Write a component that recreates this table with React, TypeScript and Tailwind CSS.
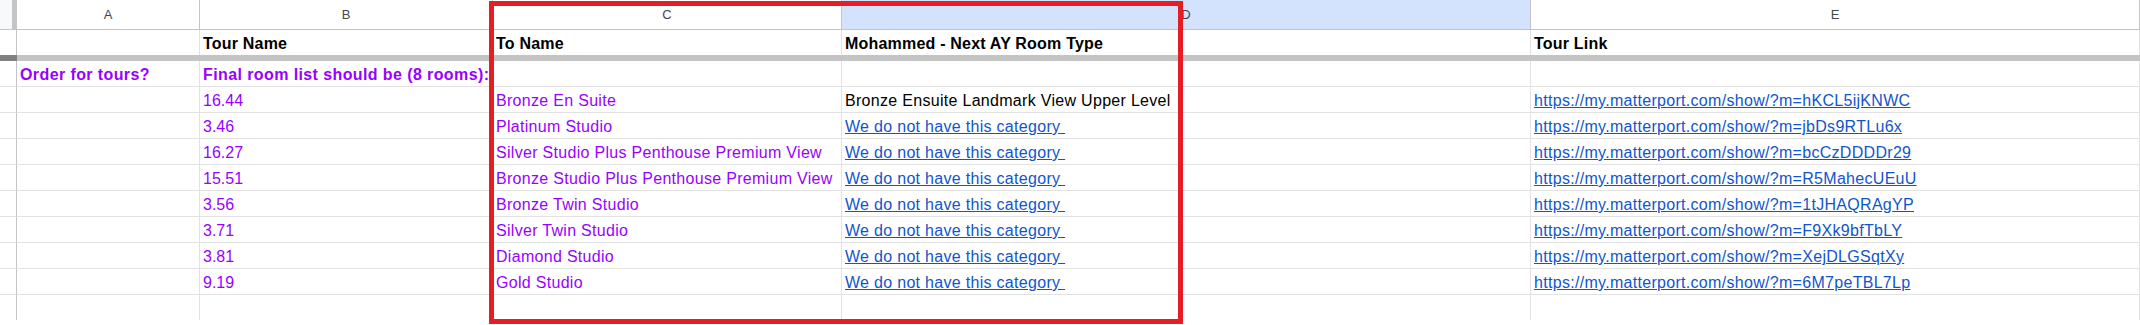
import React from 'react';

type Row = {
  time: string;
  name: string;
  roomType: string;
  isLink: boolean;
  tour: string;
};

const rows: Row[] = [
  { time: '16.44', name: 'Bronze En Suite', roomType: 'Bronze Ensuite Landmark View Upper Level', isLink: false, tour: 'https://my.matterport.com/show/?m=hKCL5ijKNWC' },
  { time: '3.46', name: 'Platinum Studio', roomType: 'We do not have this category ', isLink: true, tour: 'https://my.matterport.com/show/?m=jbDs9RTLu6x' },
  { time: '16.27', name: 'Silver Studio Plus Penthouse Premium View', roomType: 'We do not have this category ', isLink: true, tour: 'https://my.matterport.com/show/?m=bcCzDDDDr29' },
  { time: '15.51', name: 'Bronze Studio Plus Penthouse Premium View', roomType: 'We do not have this category ', isLink: true, tour: 'https://my.matterport.com/show/?m=R5MahecUEuU' },
  { time: '3.56', name: 'Bronze Twin Studio', roomType: 'We do not have this category ', isLink: true, tour: 'https://my.matterport.com/show/?m=1tJHAQRAgYP' },
  { time: '3.71', name: 'Silver Twin Studio', roomType: 'We do not have this category ', isLink: true, tour: 'https://my.matterport.com/show/?m=F9Xk9bfTbLY' },
  { time: '3.81', name: 'Diamond Studio', roomType: 'We do not have this category ', isLink: true, tour: 'https://my.matterport.com/show/?m=XejDLGSqtXy' },
  { time: '9.19', name: 'Gold Studio', roomType: 'We do not have this category ', isLink: true, tour: 'https://my.matterport.com/show/?m=6M7peTBL7Lp' },
];

const cols = 'grid grid-cols-[17px_183px_293px_349px_689px_1fr]';

// one spreadsheet cell, text sits at the bottom like in Sheets
const Cell: React.FC<{ className?: string; children?: React.ReactNode }> = ({ className = '', children }) => (
  <div className={`flex items-end pl-[3px] pb-[2px] border-r border-b border-[#e2e2e3] whitespace-pre overflow-hidden leading-[18px] ${className}`}>
    {children}
  </div>
);

const RowHead: React.FC<{ last?: boolean }> = ({ last }) => (
  <div className={`border-r border-r-[#c4c4c4] ${last ? '' : 'border-b border-b-[#e2e2e3]'}`} />
);

const ColHead: React.FC<{ label: string; active?: boolean }> = ({ label, active }) => (
  <div
    className={`flex items-center justify-center border-r border-b border-[#c4c4c4] text-[13px] text-[#444746] ${active ? 'bg-[#d3e3fd]' : 'bg-white'}`}
  >
    {label}
  </div>
);

export default function App() {
  return (
    <div className="relative w-[2140px] h-[325px] overflow-hidden bg-white text-[16px] text-black font-['Liberation_Sans',Arial,sans-serif]">
      {/* column letters */}
      <div className={`${cols} h-[30px]`}>
        <div className="bg-[#f8f9fa] border-r-[5px] border-r-[#c4c4c4] border-b border-b-[#c4c4c4]" />
        <ColHead label="A" />
        <ColHead label="B" />
        <ColHead label="C" />
        <ColHead label="D" active />
        <ColHead label="E" />
      </div>

      {/* frozen header row */}
      <div className={`${cols} h-[25px] font-bold tracking-[0.2px]`}>
        <div className="border-r border-[#c4c4c4]" />
        <Cell className="border-b-0" />
        <Cell className="border-b-0">Tour Name</Cell>
        <Cell className="border-b-0">To Name</Cell>
        <Cell className="border-b-0">Mohammed - Next AY Room Type</Cell>
        <Cell className="border-b-0">Tour Link</Cell>
      </div>

      {/* freeze bar */}
      <div className="flex h-[6px]">
        <div className="w-[17px] bg-[#808080]" />
        <div className="flex-1 bg-[#c4c4c4]" />
      </div>

      <div className={`${cols} h-[26px] font-bold text-[#9900ff] tracking-[0.4px]`}>
        <RowHead />
        <Cell>Order for tours?</Cell>
        <Cell>Final room list should be (8 rooms):</Cell>
        <Cell />
        <Cell />
        <Cell />
      </div>

      {rows.map((r) => (
        <div key={r.tour} className={`${cols} h-[26px] tracking-[0.3px]`}>
          <RowHead />
          <Cell />
          <Cell className="text-[#9900ff] tracking-normal">{r.time}</Cell>
          <Cell className="text-[#9900ff]">{r.name}</Cell>
          <Cell>
            {r.isLink ? <span className="text-[#1155cc] underline">{r.roomType}</span> : r.roomType}
          </Cell>
          <Cell>
            <span className="text-[#1155cc] underline">{r.tour}</span>
          </Cell>
        </div>
      ))}

      <div className={`${cols} h-[25px]`}>
        <RowHead last />
        <Cell className="border-b-0" />
        <Cell className="border-b-0" />
        <Cell className="border-b-0" />
        <Cell className="border-b-0" />
        <Cell className="border-b-0" />
      </div>

      {/* red annotation box */}
      <div className="absolute left-[489px] top-[1px] w-[694px] h-[323px] border-[5px] border-[#e51e25] pointer-events-none" />
    </div>
  );
}
